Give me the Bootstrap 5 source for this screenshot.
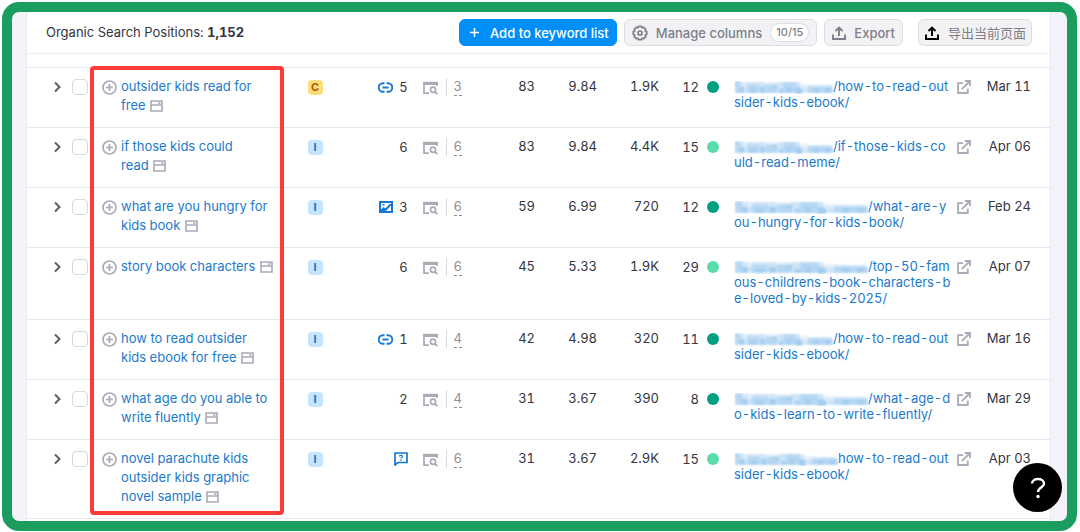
<!DOCTYPE html>
<html lang="en">
<head>
<meta charset="utf-8">
<meta name="viewport" content="width=device-width, initial-scale=1">
<title>Organic Search Positions</title>
<link href="https://cdn.jsdelivr.net/npm/bootstrap@5.3.0/dist/css/bootstrap.min.css" rel="stylesheet">
<style>
  :root { --ink: #33353f; --muted: #7d7f8a; --icon: #a9abb6; --link: #1b7acb; --line: #e6e8ee; }
  body { font-family: Inter, "Noto Sans CJK SC", sans-serif; font-size: 13px; line-height: 19px; font-variant-numeric: tabular-nums; color: var(--ink); background: #fff; }
  a { color: var(--link); text-decoration: none; }
  svg { display: block; }
  .frame { margin: 2px 3px 1px 2px; border: 10px solid #1b9d60; border-radius: 17px; background: #f3f4f9; min-height: calc(100vh - 3px); padding: 0 16px 0 14px; }
  .panel { background: #fff; border: solid var(--line); border-width: 0 1px; }
  .toolbar { height: 42px; padding: 0 18px 0 19px; border-bottom: 1px solid #eceef3; margin-bottom: 13px; }
  .toolset { gap: 7px; }
  .toolbar .btn { --bs-btn-font-size: 13px; --bs-btn-line-height: 18px; --bs-btn-border-radius: 6px; --bs-btn-font-weight: 500; height: 27px; }
  .toolbar .btn-add { --bs-btn-color: #fff; --bs-btn-bg: #008ff8; --bs-btn-border-color: #008ff8; padding: 0 7px 0 9px; gap: 10px; }
  .toolbar .btn-tool { --bs-btn-color: #7d7f8a; --bs-btn-bg: #f2f2f5; --bs-btn-border-color: #dcdde3; padding: 0 7px; gap: 8px; }
  .toolbar .btn-cn { --bs-btn-font-weight: 400; margin-left: 8px; padding: 0 5px 0 6px; gap: 9px; }
  .count-pill { font-size: 11px; line-height: 17px; border: 1px solid #dcdde3; background: #fff; padding: 0 5px; }
  .positions { table-layout: fixed; margin: 0; --bs-table-color: #33353f; --bs-table-bg: transparent; border-top: 1px solid var(--line); }
  .positions > tbody > tr > td { padding: 9px 0 12px; border-bottom: 1px solid var(--line); vertical-align: top; }
  .c-open { width: 41px; } .c-check { width: 26px; } .c-key { width: 194px; } .c-intent { width: 54px; }
  .c-serp { width: 128px; } .c-pos { width: 65px; } .c-num { width: 62px; } .c-kd { width: 60px; }
  .c-out { width: 27px; } .c-date { width: 70px; }
  .positions .check { width: 16px; height: 16px; margin: 0; border: 1px solid #d6d8de; border-radius: 4px; display: block; }
  .row-line { height: 20px; display: flex; align-items: center; }
  .open-btn { border: 0; background: none; padding: 0; margin-left: 24px; }
  .plus-btn { border: 0; background: none; padding: 0; margin: 3px 4px 0 8px; height: 15px; flex: none; }
  .inline-icon { display: inline-block; vertical-align: -2px; margin-left: 1px; color: var(--icon); }
  .intent { width: 15px; height: 15px; border-radius: 4px; font-size: 11px; line-height: 15px; font-weight: 700; text-align: center; margin: 3px auto 0; }
  .intent-i { background: #c4e5fe; color: #1b6fbf; }
  .intent-c { background: #fddc7b; color: #a85f0c; }
  .serp { justify-content: flex-end; padding-right: 8px; }
  .serp .feature { color: #1478d4; margin-right: 6px; }
  .serp .feature:has(+ .preview) { margin-right: 0; }
  .serp .preview { color: var(--icon); margin: 2px 8px 0 15px; }
  .serp .count { color: #8c8e98; border-left: 1px solid #d9dae1; padding-left: 7px; }
  .serp .count a { color: inherit; border-bottom: 1px dashed #8c8e98; line-height: 17px; display: block; }
  .dot { width: 12px; height: 12px; border-radius: 50%; margin-left: 8px; background: #009f81; }
  .dot-light { background: #59ddaa; }
  .positions > tbody > tr > td.page-url { padding: 10px 0 13px 15px; line-height: 16px; word-break: break-all; }
  .mask { display: inline-block; height: 13px; width: 99px; vertical-align: -3px; }
  .mask-wide { width: 134px; }
  .mask-end { width: 104px; }
  .out { color: var(--icon); display: inline-block; margin: 3px 0 0 4px; }
  .positions > tbody > tr > td.date { padding-right: 19px; }
  .marker { position: absolute; left: 63px; top: -1px; bottom: 4px; width: 194px; border: 4px solid #ff3b39; border-radius: 4px; pointer-events: none; }
  .help { position: fixed; right: 18px; bottom: 20px; width: 49px; height: 49px; border: 0; border-radius: 50%; background: #000; color: #fff; padding: 0; }
</style>
</head>
<body>
<svg width="0" height="0" class="position-absolute" aria-hidden="true">
  <defs>
    <filter id="soft"><feGaussianBlur stdDeviation="0.8"/></filter>
    <symbol id="chev" viewBox="0 0 12 12"><path d="M4 1.5 8.500 6 4 10.500" fill="none" stroke="#5c5e68" stroke-width="2"/></symbol>
    <symbol id="plus" viewBox="0 0 15 15"><g fill="none" stroke="#a9abb6" stroke-width="1.700"><circle cx="7.500" cy="7.500" r="6.500"/><path d="M7.500 4v7M4 7.500h7"/></g></symbol>
    <symbol id="page" viewBox="0 0 13 12"><path d="M1 1h11v10H1zM1 5h11M8 3h2.500" fill="none" stroke="currentColor" stroke-width="1.600"/></symbol>
    <symbol id="preview" viewBox="0 0 15 14"><path d="M6 12.200H1V2h13v3" fill="none" stroke="currentColor" stroke-width="1.700"/><path d="M.2.800h14.600v3.200H.2z" fill="currentColor"/><circle cx="10" cy="8.800" r="2.600" fill="none" stroke="currentColor" stroke-width="1.700"/><path d="m12 10.800 2.300 2.300" stroke="currentColor" stroke-width="1.900"/></symbol>
    <symbol id="chain" viewBox="0 0 15 11"><path d="M6.500 1.200H5a4.200 4.200 0 0 0 0 8.600h1.500M8.500 1.200H10a4.200 4.200 0 0 1 0 8.600H8.500M4.500 5.500h6" fill="none" stroke="currentColor" stroke-width="1.900"/></symbol>
    <symbol id="pic" viewBox="0 0 14 12"><path d="M1 1h12v10H1z" fill="none" stroke="currentColor" stroke-width="2"/><path d="M2 2h10v8H2z" fill="#fff"/><path d="M2 8.500 4.500 6 6.500 7.500 10.500 3H12v1.500L8 9l-1.500 1H2z" fill="currentColor"/><path d="M3.500 3h2v1.500h-2z" fill="currentColor"/></symbol>
    <symbol id="ask" viewBox="0 0 14 14"><path d="M1 13V1h12v9.500H4z" fill="none" stroke="currentColor" stroke-width="1.700"/><path d="M5.500 4.500c0-1.700 3-1.500 3 0 0 1-1.500 1-1.500 2M7 7.500V9" fill="none" stroke="currentColor" stroke-width="1.200"/></symbol>
    <symbol id="outlink" viewBox="0 0 14 14"><path d="M6 3.200H1V13h9.800V8.500M4.800 9.200 12.500 1.500M7.800 1H13v5.200" fill="none" stroke="currentColor" stroke-width="1.800"/></symbol>
    <symbol id="upload" viewBox="0 0 14 14"><path d="M1 8.500V13h12V8.500M7 10V2M3.500 5 7 1.500 10.500 5" fill="none" stroke="currentColor" stroke-width="1.900"/></symbol>
    <symbol id="gear" viewBox="0 0 16 16"><g fill="none" stroke="currentColor" stroke-width="1.700"><path d="M6.500 1.300h3l.7 1.500 1.600-.5 2 2-.6 1.600 1.500.7v2.800l-1.500.7.6 1.600-2 2-1.600-.5-.7 1.500h-3l-.7-1.500-1.600.5-2-2 .6-1.600-1.500-.7V6.600l1.500-.7-.6-1.600 2-2 1.600.5z" stroke-linejoin="round"/><circle cx="8" cy="8" r="2"/></g></symbol>
    <symbol id="mosaic" viewBox="0 0 99 13" preserveAspectRatio="none">
      <g filter="url(#soft)">
      <path fill="#cfe4f7" d="M1 1h65v11H1zM66 4h32v8H66z"/>
      <path fill="#b5d7f3" d="M1 0h5v12H1zM13 4h12v8H13zM32 4h11v8H32zM49 1h13v11H49zM74 6h25v6H74z"/>
      <path fill="#a3cdf0" d="M6 6h4v6H6zM16 8h6v4h-6zM26 6h5v6h-5zM38 4h5v3h-5zM45 8h4v4h-4zM53 6h4v6h-4zM62 6h6v7h-6zM80 7h5v5h-5zM91 7h5v5h-5z"/>
      <path fill="#e3f0fb" d="M10 1h3v5h-3zM30 1h12v2H30zM66 3h8v4h-8z"/>
      </g>
    </symbol>
  </defs>
</svg>

<main class="frame d-flex">
  <div class="panel flex-grow-1">
    <header class="toolbar d-flex align-items-center justify-content-between">
      <div>Organic Search Positions: <strong>1,152</strong></div>
      <div class="d-flex align-items-center toolset">
        <button type="button" class="btn btn-add d-flex align-items-center"><svg width="11" height="11" viewBox="0 0 11 11"><path d="M5.500 1v9M1 5.500h9" stroke="#fff" stroke-width="1.600"/></svg>Add to keyword list</button>
        <button type="button" class="btn btn-tool d-flex align-items-center"><svg width="16" height="16"><use href="#gear"/></svg>Manage columns<span class="count-pill rounded-pill">10/15</span></button>
        <button type="button" class="btn btn-tool d-flex align-items-center"><svg width="14" height="14"><use href="#upload"/></svg>Export</button>
        <button type="button" class="btn btn-tool btn-cn d-flex align-items-center"><svg width="14" height="14" class="text-black"><use href="#upload"/></svg>导出当前页面</button>
      </div>
    </header>

    <div class="position-relative">
      <table class="table positions">
        <colgroup><col class="c-open"><col class="c-check"><col class="c-key"><col class="c-intent"><col class="c-serp"><col class="c-pos"><col class="c-num"><col class="c-num"><col class="c-kd"><col><col class="c-out"><col class="c-date"></colgroup>
        <tbody>
          <tr>
            <td><div class="row-line"><button type="button" class="open-btn" aria-label="Expand"><svg width="12" height="12"><use href="#chev"/></svg></button></div></td>
            <td><div class="row-line"><input type="checkbox" class="form-check-input check ms-1" aria-label="Select row"></div></td>
            <td><div class="d-flex align-items-start"><button type="button" class="plus-btn" aria-label="Add keyword"><svg width="15" height="15"><use href="#plus"/></svg></button><div class="key-text"><a href="#">outsider kids read for<br>free</a> <svg class="inline-icon" width="13" height="12"><use href="#page"/></svg></div></div></td>
            <td><div class="intent intent-c">C</div></td>
            <td><div class="row-line serp"><svg class="feature" width="15" height="11"><use href="#chain"/></svg><span>5</span><svg class="preview" width="15" height="14"><use href="#preview"/></svg><span class="count"><a href="#">3</a></span></div></td>
            <td class="text-end">83</td><td class="text-end">9.84</td><td class="text-end">1.9K</td>
            <td><div class="row-line justify-content-end">12<span class="dot"></span></div></td>
            <td class="page-url"><a href="#"><svg class="mask"><use href="#mosaic"/></svg>/how-to-read-outsider-kids-ebook/</a></td>
            <td><a href="#" class="out" aria-label="Open page"><svg width="14" height="14"><use href="#outlink"/></svg></a></td>
            <td class="text-end date">Mar 11</td>
          </tr>
          <tr>
            <td><div class="row-line"><button type="button" class="open-btn" aria-label="Expand"><svg width="12" height="12"><use href="#chev"/></svg></button></div></td>
            <td><div class="row-line"><input type="checkbox" class="form-check-input check ms-1" aria-label="Select row"></div></td>
            <td><div class="d-flex align-items-start"><button type="button" class="plus-btn" aria-label="Add keyword"><svg width="15" height="15"><use href="#plus"/></svg></button><div class="key-text"><a href="#">if those kids could<br>read</a> <svg class="inline-icon" width="13" height="12"><use href="#page"/></svg></div></div></td>
            <td><div class="intent intent-i">I</div></td>
            <td><div class="row-line serp"><span>6</span><svg class="preview" width="15" height="14"><use href="#preview"/></svg><span class="count"><a href="#">6</a></span></div></td>
            <td class="text-end">83</td><td class="text-end">9.84</td><td class="text-end">4.4K</td>
            <td><div class="row-line justify-content-end">15<span class="dot dot-light"></span></div></td>
            <td class="page-url"><a href="#"><svg class="mask"><use href="#mosaic"/></svg>/if-those-kids-could-read-meme/</a></td>
            <td><a href="#" class="out" aria-label="Open page"><svg width="14" height="14"><use href="#outlink"/></svg></a></td>
            <td class="text-end date">Apr 06</td>
          </tr>
          <tr>
            <td><div class="row-line"><button type="button" class="open-btn" aria-label="Expand"><svg width="12" height="12"><use href="#chev"/></svg></button></div></td>
            <td><div class="row-line"><input type="checkbox" class="form-check-input check ms-1" aria-label="Select row"></div></td>
            <td><div class="d-flex align-items-start"><button type="button" class="plus-btn" aria-label="Add keyword"><svg width="15" height="15"><use href="#plus"/></svg></button><div class="key-text"><a href="#">what are you hungry for<br>kids book</a> <svg class="inline-icon" width="13" height="12"><use href="#page"/></svg></div></div></td>
            <td><div class="intent intent-i">I</div></td>
            <td><div class="row-line serp"><svg class="feature" width="14" height="12"><use href="#pic"/></svg><span>3</span><svg class="preview" width="15" height="14"><use href="#preview"/></svg><span class="count"><a href="#">6</a></span></div></td>
            <td class="text-end">59</td><td class="text-end">6.99</td><td class="text-end">720</td>
            <td><div class="row-line justify-content-end">12<span class="dot"></span></div></td>
            <td class="page-url"><a href="#"><svg class="mask mask-wide"><use href="#mosaic"/></svg>/what-are-you-hungry-for-kids-book/</a></td>
            <td><a href="#" class="out" aria-label="Open page"><svg width="14" height="14"><use href="#outlink"/></svg></a></td>
            <td class="text-end date">Feb 24</td>
          </tr>
          <tr>
            <td><div class="row-line"><button type="button" class="open-btn" aria-label="Expand"><svg width="12" height="12"><use href="#chev"/></svg></button></div></td>
            <td><div class="row-line"><input type="checkbox" class="form-check-input check ms-1" aria-label="Select row"></div></td>
            <td><div class="d-flex align-items-start"><button type="button" class="plus-btn" aria-label="Add keyword"><svg width="15" height="15"><use href="#plus"/></svg></button><div class="key-text"><a href="#">story book characters</a> <svg class="inline-icon" width="13" height="12"><use href="#page"/></svg></div></div></td>
            <td><div class="intent intent-i">I</div></td>
            <td><div class="row-line serp"><span>6</span><svg class="preview" width="15" height="14"><use href="#preview"/></svg><span class="count"><a href="#">6</a></span></div></td>
            <td class="text-end">45</td><td class="text-end">5.33</td><td class="text-end">1.9K</td>
            <td><div class="row-line justify-content-end">29<span class="dot dot-light"></span></div></td>
            <td class="page-url"><a href="#"><svg class="mask mask-wide"><use href="#mosaic"/></svg>/top-50-famous-childrens-book-characters-be-loved-by-kids-2025/</a></td>
            <td><a href="#" class="out" aria-label="Open page"><svg width="14" height="14"><use href="#outlink"/></svg></a></td>
            <td class="text-end date">Apr 07</td>
          </tr>
          <tr>
            <td><div class="row-line"><button type="button" class="open-btn" aria-label="Expand"><svg width="12" height="12"><use href="#chev"/></svg></button></div></td>
            <td><div class="row-line"><input type="checkbox" class="form-check-input check ms-1" aria-label="Select row"></div></td>
            <td><div class="d-flex align-items-start"><button type="button" class="plus-btn" aria-label="Add keyword"><svg width="15" height="15"><use href="#plus"/></svg></button><div class="key-text"><a href="#">how to read outsider<br>kids ebook for free</a> <svg class="inline-icon" width="13" height="12"><use href="#page"/></svg></div></div></td>
            <td><div class="intent intent-i">I</div></td>
            <td><div class="row-line serp"><svg class="feature" width="15" height="11"><use href="#chain"/></svg><span>1</span><svg class="preview" width="15" height="14"><use href="#preview"/></svg><span class="count"><a href="#">4</a></span></div></td>
            <td class="text-end">42</td><td class="text-end">4.98</td><td class="text-end">320</td>
            <td><div class="row-line justify-content-end">11<span class="dot"></span></div></td>
            <td class="page-url"><a href="#"><svg class="mask"><use href="#mosaic"/></svg>/how-to-read-outsider-kids-ebook/</a></td>
            <td><a href="#" class="out" aria-label="Open page"><svg width="14" height="14"><use href="#outlink"/></svg></a></td>
            <td class="text-end date">Mar 16</td>
          </tr>
          <tr>
            <td><div class="row-line"><button type="button" class="open-btn" aria-label="Expand"><svg width="12" height="12"><use href="#chev"/></svg></button></div></td>
            <td><div class="row-line"><input type="checkbox" class="form-check-input check ms-1" aria-label="Select row"></div></td>
            <td><div class="d-flex align-items-start"><button type="button" class="plus-btn" aria-label="Add keyword"><svg width="15" height="15"><use href="#plus"/></svg></button><div class="key-text"><a href="#">what age do you able to<br>write fluently</a> <svg class="inline-icon" width="13" height="12"><use href="#page"/></svg></div></div></td>
            <td><div class="intent intent-i">I</div></td>
            <td><div class="row-line serp"><span>2</span><svg class="preview" width="15" height="14"><use href="#preview"/></svg><span class="count"><a href="#">4</a></span></div></td>
            <td class="text-end">31</td><td class="text-end">3.67</td><td class="text-end">390</td>
            <td><div class="row-line justify-content-end">8<span class="dot"></span></div></td>
            <td class="page-url"><a href="#"><svg class="mask mask-wide"><use href="#mosaic"/></svg>/what-age-do-kids-learn-to-write-fluently/</a></td>
            <td><a href="#" class="out" aria-label="Open page"><svg width="14" height="14"><use href="#outlink"/></svg></a></td>
            <td class="text-end date">Mar 29</td>
          </tr>
          <tr>
            <td><div class="row-line"><button type="button" class="open-btn" aria-label="Expand"><svg width="12" height="12"><use href="#chev"/></svg></button></div></td>
            <td><div class="row-line"><input type="checkbox" class="form-check-input check ms-1" aria-label="Select row"></div></td>
            <td><div class="d-flex align-items-start"><button type="button" class="plus-btn" aria-label="Add keyword"><svg width="15" height="15"><use href="#plus"/></svg></button><div class="key-text"><a href="#">novel parachute kids<br>outsider kids graphic<br>novel sample</a> <svg class="inline-icon" width="13" height="12"><use href="#page"/></svg></div></div></td>
            <td><div class="intent intent-i">I</div></td>
            <td><div class="row-line serp"><svg class="feature" width="14" height="14"><use href="#ask"/></svg><svg class="preview" width="15" height="14"><use href="#preview"/></svg><span class="count"><a href="#">6</a></span></div></td>
            <td class="text-end">31</td><td class="text-end">3.67</td><td class="text-end">2.9K</td>
            <td><div class="row-line justify-content-end">15<span class="dot dot-light"></span></div></td>
            <td class="page-url"><a href="#"><svg class="mask mask-end"><use href="#mosaic"/></svg>how-to-read-outsider-kids-ebook/</a></td>
            <td><a href="#" class="out" aria-label="Open page"><svg width="14" height="14"><use href="#outlink"/></svg></a></td>
            <td class="text-end date">Apr 03</td>
          </tr>
        </tbody>
      </table>
      <div class="marker"></div>
    </div>
  </div>
</main>
<button type="button" class="help" aria-label="Help"><svg class="mx-auto" width="16" height="22" viewBox="0 0 16 22"><path d="M2 6.500C2 .5 14 .5 14 6.500c0 4-6 4-6 8.500" fill="none" stroke="#fff" stroke-width="2.400"/><circle cx="8" cy="19.500" r="1.700" fill="#fff"/></svg></button>
<script src="https://cdn.jsdelivr.net/npm/bootstrap@5.3.0/dist/js/bootstrap.bundle.min.js"></script>
</body>
</html>
